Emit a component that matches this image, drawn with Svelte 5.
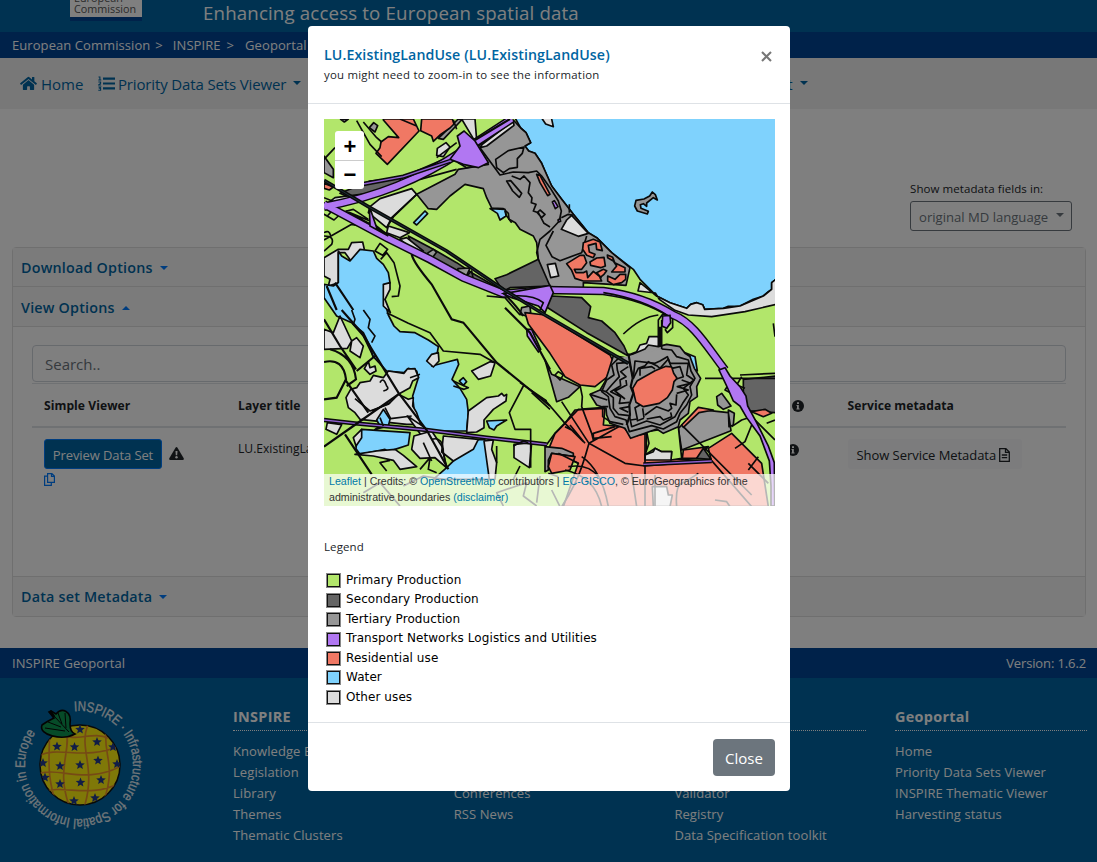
<script>
  const legend = [
    ['Primary Production', '#b2e66b'],
    ['Secondary Production', '#646464'],
    ['Tertiary Production', '#969696'],
    ['Transport Networks Logistics and Utilities', '#b177f2'],
    ['Residential use', '#f07864'],
    ['Water', '#7fd2fd'],
    ['Other uses', '#dcdcdc']
  ];

  const footerColumns = [
    { title: 'INSPIRE', links: ['Knowledge Base', 'Legislation', 'Library', 'Themes', 'Thematic Clusters'] },
    { title: 'News', links: ['News', 'Events', 'Conferences', 'RSS News'] },
    { title: 'Tools', links: ['Find', 'Share', 'Validator', 'Registry', 'Data Specification toolkit'] },
    { title: 'Geoportal', links: ['Home', 'Priority Data Sets Viewer', 'INSPIRE Thematic Viewer', 'Harvesting status'] }
  ];

  const stars = [
    [80, 729.5], [57, 746.5], [74.5, 747], [97, 742], [60, 766], [80, 765], [98, 760.5],
    [60, 784], [80.5, 782.5], [101, 780], [74, 801], [95, 798], [43, 763], [45, 777.5], [117, 764], [113, 747]
  ];

  const starPoints = (cx, cy) =>
    Array.from({ length: 10 }, (_, i) => {
      const r = i % 2 ? 2.2 : 5;
      const a = (Math.PI * i) / 5 - Math.PI / 2;
      return `${(cx + r * Math.cos(a)).toFixed(1)},${(cy + r * Math.sin(a)).toFixed(1)}`;
    }).join(' ');
</script>

<div class="page">
  <header class="banner">
    <div class="ec-logo"><span>European</span><span>Commission</span></div>
    <div class="tagline">Enhancing access to European spatial data</div>
  </header>
  <nav class="crumbs">
    <span>European Commission</span><i>&gt;</i><span>INSPIRE</span><i>&gt;</i><span>Geoportal</span>
  </nav>
  <nav class="menu">
    <a class="item home">
      <svg width="17" height="15" viewBox="0 0 576 512"><path fill="currentColor" d="M280 148L96 300v164a16 16 0 0 0 16 16l112-.3a16 16 0 0 0 16-16V368a16 16 0 0 1 16-16h64a16 16 0 0 1 16 16v96a16 16 0 0 0 16 16l112 .3a16 16 0 0 0 16-16V300L296 148a12 12 0 0 0-16 0zM572 251l-84-69V44a12 12 0 0 0-12-12h-56a12 12 0 0 0-12 12v72l-90-74a48 48 0 0 0-61 0L4 251a12 12 0 0 0-1 17l25 31a12 12 0 0 0 17 2l235-194a12 12 0 0 1 16 0l235 194a12 12 0 0 0 17-2l25-31a12 12 0 0 0-1-17z" /></svg>
      <span>Home</span>
    </a>
    <a class="item viewer">
      <svg width="17" height="15" viewBox="0 0 17 15"><path fill="currentColor" d="M5 1.5h12v2.2H5zM5 6.4h12v2.2H5zM5 11.3h12v2.2H5z" /><path fill="none" stroke="currentColor" stroke-width="1.1" d="M.5 1h1.4v3M.3 4h3M.4 6h2.2v1.3L.6 9h2.5M.4 11h2.2l-1 1.2h1v2H.3" /></svg>
      <span>Priority Data Sets Viewer</span><b class="caret"></b>
    </a>
    <a class="item last"><span>Contact</span><b class="caret"></b></a>
  </nav>

  <main>
    <div class="language">
      <label for="md">Show metadata fields in:</label>
      <button id="md">original MD language<b class="caret"></b></button>
    </div>
    <section class="accordion">
      <h5 class="first">Download Options<b class="caret blue"></b></h5>
      <h5>View Options<b class="caret blue up"></b></h5>
      <div class="view-body">
        <div class="search">Search..</div>
        <div class="row head">
          <span>Simple Viewer</span><span>Layer title</span>
          <span class="info"><svg width="12" height="12" viewBox="0 0 12 12"><circle cx="6" cy="6" r="6" fill="#212529" /><path d="M5 2.2h2v1.7H5zM4.5 5h2.3v3.5h.8v1H4.4v-1H5V6h-.5z" fill="#fff" /></svg></span>
          <span>Service metadata</span>
        </div>
        <div class="row">
          <span class="preview">
            <button class="primary">Preview Data Set</button>
            <svg width="15" height="13" viewBox="0 0 15 13"><path d="M6.5.8Q7.5-.7 8.5.8L14.7 11.2Q15.3 13 13.7 13H1.3Q-.3 13 .3 11.2z" fill="#212529" /><path d="M6.5 4h2L8.2 8.3H6.8z" fill="#fff" /><circle cx="7.5" cy="10.2" r="1.2" fill="#fff" /></svg>
            <svg class="copy" width="11" height="13" viewBox="0 0 11 13"><path d="M3.6.6h4.3L10.4 3v6.3H3.6zM7.5.6v2.8h2.9M3.5 3.2H.6v9.2h6.7V9.5" fill="none" stroke="#007bff" stroke-width="1.2" /></svg>
          </span>
          <span class="layer">LU.ExistingLandUse</span>
          <span class="info low"><svg width="12" height="12" viewBox="0 0 12 12"><circle cx="6" cy="6" r="6" fill="#212529" /><path d="M5 2.2h2v1.7H5zM4.5 5h2.3v3.5h.8v1H4.4v-1H5V6h-.5z" fill="#fff" /></svg></span>
          <span><button class="light">Show Service Metadata <svg width="11" height="14" viewBox="0 0 11 14"><path d="M.7.7h6.2l3.4 3.4v9.2H.7zM6.5.7v3.7h3.8M2.8 7h5.4M2.8 9.7h5.4" fill="none" stroke="#212529" stroke-width="1.3" /></svg></button></span>
        </div>
      </div>
      <h5 class="end">Data set Metadata<b class="caret blue"></b></h5>
    </section>
  </main>

  <div class="foot-bar"><span>INSPIRE Geoportal</span><span class="version">Version: 1.6.2</span></div>
  <footer>
    <svg class="logo" width="160" height="150" viewBox="0 690 160 150">
      <defs>
        <path id="ring" d="M74.3 711.2A54 54 0 0 1 83.7 818.8A54 54 0 0 1 74.3 711.2" />
        <clipPath id="ball"><circle cx="80" cy="765" r="40" /></clipPath>
      </defs>
      <circle cx="80" cy="765" r="40" fill="#fff010" stroke="#111" stroke-width="1.5" />
      <g clip-path="url(#ball)">
        <path d="M49 730C51 755 44 770 58 810M66 730C72 750 55 770 70 808M88 724C78 750 97 766 84 808M106 730C103 755 117 766 103 803M38 756C60 745 83 762 122 745M37 774C60 766 85 786 123 765M42 792C65 784 88 799 120 783M62 735C75 742 94 731 108 738" fill="none" stroke="#ed952a" stroke-width="1.7" />
        {#each stars as [x, y]}<polygon points={starPoints(x, y)} fill="#223a8c" />{/each}
      </g>
      <path d="M51 711L56 714C62 707 72 711 70 724Q70 732 75 734C62 741 38 735 42 725Q46 722 54 718L49 712z" fill="#0d9650" stroke="#070707" stroke-width="1.6" />
      <path d="M54 716L69 732M58 713l4 11M65 713l1 15M48 722l13 5M45 728l20 3" stroke="#070707" fill="none" />
      <path d="M50 711l4 6" stroke="#070707" stroke-width="3" />
      <text class="ring-text"><textPath href="#ring" textLength="293" lengthAdjust="spacingAndGlyphs">INSPIRE · Infrastructure for Spatial Information in Europe</textPath></text>
    </svg>
    {#each footerColumns as col}
      <div class="col">
        <h6>{col.title}</h6>
        {#each col.links as link}<a>{link}</a>{/each}
      </div>
    {/each}
  </footer>
</div>

<div class="backdrop"></div>
<div class="modal">
  <div class="modal-head">
    <div>
      <h4>LU.ExistingLandUse (LU.ExistingLandUse)</h4>
      <p>you might need to zoom-in to see the information</p>
    </div>
    <svg class="x" width="11" height="11" viewBox="0 0 11 11"><path d="M1 1l9 9M10 1l-9 9" stroke="#777" stroke-width="2.1" /></svg>
  </div>
  <div class="modal-body">
    <div class="map">
      <svg width="451" height="387" viewBox="12 9 1353 1161">
        <rect x="12" y="9" width="1353" height="1161" fill="#b2e66b" />
        <g class="shapes">
          <!-- sea and coast -->
          <path class="water" d="M582 0L602 36L618 50L632 80L615 90L626 105L645 112L664 140L675 165L695 210L725 250L760 295L805 350L830 365L875 410L940 460L960 490L975 505L1010 540L1050 560L1100 577L1112 565L1130 560L1148 566L1154 580L1210 577L1225 571L1260 570L1300 550L1330 540L1346 526L1355 520V500L1370 488V0z" />
          <path class="other" d="M661 0L677 24L700 32L693 0zM960 500L1010 540L1050 560L1100 577L1112 565L1130 560L1148 566L1154 580L1210 577L1260 570L1330 540L1355 520V500L1370 488V565L1275 587L1175 602L1105 597L1065 583L1018 550L1006 531L954 525z" />
          <path class="tertiary" d="M475 90L580 12L602 36L618 50L632 80L615 90L626 105L645 112L664 140L675 165L695 210L725 250L760 295L805 350L830 365L875 410L930 455L918 508L790 500V521L675 510L655 430L650 380L640 360L600 340L586 320L567 310L565 292L550 278L515 276L500 245L490 218L435 205L390 240L350 280L325 278L290 235L405 175L415 160L505 145z" />
          <path class="outline" d="M527 130L565 104L612 93L607 112L592 128V154L568 158L550 170L530 155zM575 180L600 190L612 180L630 200L625 230L636 245L634 260L648 265L640 285L655 290L672 322L690 333M480 95L540 177L580 168L625 170L650 165L665 180L690 215L715 255L724 285L718 315L690 345L660 370L650 410L655 430M724 305L745 295L760 298M700 345L678 388L696 422L720 434L785 410L800 360M748 265V290M652 290L660 282L675 295L665 305z" />
          <path class="tertiary" d="M1006 236L997 228L989 240L972 249L948 253L944 270L952 285L982 294L985 286L963 277L961 266L970 263L980 271V261L1000 245L1012 252z" />
          <path class="other" d="M486 86L580 14L582 28L500 90L480 95zM352 97L378 80L390 93L370 122L350 118zM425 9L460 68L470 72L465 9zM740 312L755 298L798 345L805 352L775 361L724 340zM682 446L706 442L716 480L692 485z" />
          <path class="secondary" d="M525 488L560 476L655 430L690 510L570 515L550 526zM675 570L695 540L785 545L812 572L805 605L845 615L885 650L912 690L925 720L800 650zM265 360L340 400L410 440L455 470L550 525L430 480L280 400zM150 195L242 186L245 200L100 250L60 232zM1270 790L1370 780V890L1270 884z" />
          <path class="tertiary" d="M12 120L40 160V185L12 170zM62 10L85 9L73 18zM148 35L161 20L173 29L165 48zM414 458L450 456L435 490L410 475zM355 67L415 9L425 12L370 70zM325 410L340 400L350 408L335 428L318 418zM605 575L630 570L632 590L620 600L600 595z" />
          <!-- housing in the north and by the harbour -->
          <path class="residential" d="M190 9H280L297 45L202 145L168 112L180 95L183 78L205 62L236 65L190 12zM305 9H397L402 24L390 36L362 55L340 76L335 60L302 44zM650 175L660 178L690 235L683 239L660 200zM12 202L40 213L28 222L12 217z" />
          <path class="residential" d="M740 443L780 418L792 418L800 440L785 460L763 460L768 470H790L800 465L803 485L820 466L843 485L830 470L850 460L860 464L852 475L840 485L845 495H790L765 487L755 463zM810 438L830 426L852 424L856 450L842 455L812 448zM788 400L790 380L820 370L840 378L847 404L830 400L828 382L805 388L808 408L825 415L820 425L800 418zM862 417L878 424L884 440L915 455V468L875 468L890 450L880 435L863 425zM863 480L885 490L900 475H917V490L905 500L880 506L863 495z" />
          <path class="purple" d="M697 258L703 254L714 272L706 278zM714 312L720 308L722 316L716 318z" />
          <!-- western lake district -->
          <path class="other" d="M12 425L55 400L85 400L95 380L128 378L133 400L115 435L95 438L75 410L55 410L55 500L25 510L30 490L12 480z" />
          <path class="water" d="M55 405L65 420L90 435L120 400L160 405L170 427L190 445L205 470L210 500L196 520L194 555L205 597L222 630L240 647L285 650L325 672L355 692L350 722L335 750L382 738L412 730L416 745L396 790L420 817L440 850L445 890L440 945H320L302 924L282 880L278 840L295 785L290 765L265 757L252 770L200 765L160 722L130 660L95 620L50 600L12 545V505L40 510L55 500z" />
          <path class="other" d="M12 640L40 650L60 600L95 675L82 697L12 700zM78 845L92 820L110 815L120 800L150 795L160 778L190 785L205 765L252 772L262 759L285 758L296 785L278 795L270 815L235 835L265 850L280 845L278 870L290 890L302 925L260 925L120 910L105 890L85 875zM95 675L110 665L130 690L120 725L90 705zM133 758L145 736L150 755L165 750L168 765L150 775z" />
          <path class="other" d="M262 900L300 925L335 950L380 1055L345 1025L320 980zM455 765L510 737L525 740L512 780L475 790zM445 885L500 845L535 840L545 832L552 840L560 835L558 855L520 880L492 912V935L470 948L440 950z" />
          <path class="outline" d="M95 582L105 610L100 625L130 650L150 690L160 725M130 582L150 610L145 635L165 660L155 680M105 848L150 885L205 865L235 835M195 875L212 908L275 900" />
          <path class="water" d="M165 940L180 930L170 912L190 880L210 910L205 930zM110 975L125 940L270 950L265 987L225 1000L210 1010L195 1000L170 1005L120 1015L108 998zM405 1030L465 972L494 970L510 1020L515 1090H340L380 1055zM500 915L560 912L530 930L522 942L508 935zM418 795L430 785L440 797L430 808z" />
          <path class="other" d="M105 1015L170 1005L225 1000L250 1018L290 1052L240 1060L220 1033L160 1020zM100 965L125 940L125 965L108 990zM282 960L335 945L365 990L380 1055L345 1025L300 1027L275 1000zM370 960L475 970L460 1000L400 1035L365 1008zM492 975L520 972L515 1000L530 1040L525 1090L508 1090zM582 985L635 980L628 1055L582 1025zM22 920L65 926L50 955L18 940zM190 505L210 500L210 520L195 550L211 590L190 570zM320 735L335 715L355 710L357 735L340 753z" />
          <!-- railway side plots -->
          <path class="other" d="M18 265L45 245L200 225L150 240L90 262zM150 272L180 248L275 218L290 235L215 305L200 335L145 290zM242 185L382 125L400 130L290 180L240 200zM205 330L268 350L240 365L200 350zM240 370L260 365L310 405L282 403z" />
          <path class="water" d="M281 320L315 285L323 293L290 327zM510 278L555 280L558 300L540 312L532 292z" />
          <path class="outline" d="M12 372L95 325L120 330M12 360Q45 360 35 385L12 405M12 350Q28 340 32 360M165 405L180 382L203 400L188 418zM182 430L200 410L222 440L240 510L235 540L215 542M110 14L150 85L185 122M130 18L170 65L185 78M12 295L22 300L40 280L55 300L42 312zM80 285L100 280L145 310M78 285L180 340L205 358L150 315zM415 140L440 137L470 150L440 155zM560 195L572 194L605 232L598 244L578 225zM430 490L455 465L460 490M300 190L410 160M50 260L12 245M290 235L220 303L200 335M555 284L560 300L575 320" />
        </g>

        <!-- southern quarters -->
        <g class="shapes" transform="translate(675 582)">
          <path class="residential" d="M-60 8L0 15L195 135L205 155L188 200L150 230L105 225L60 200L15 130L-50 42zM60 340L90 300L180 295L175 345L235 350L260 380L305 370L303 440L500 455L490 415L560 370L650 460L670 590H55L100 460L10 420L30 370z" />
          <path class="tertiary" d="M0 150L20 193L105 230L70 262L35 275zM400 355L460 298L550 308L558 362L410 420zM0 410L50 415L85 430V440L20 430L10 450V480L0 485zM515 260L530 250L558 288L535 298L518 285zM550 300L568 310L565 345L552 350z" />
          <path class="residential" d="M10 470L20 430L90 440L75 480L20 490zM410 345L460 292L505 300L462 308L415 352zM415 420L490 410L455 445L412 445zM620 305L660 298L680 310L655 320z" />
          <path class="secondary" d="M455 445L475 415L498 448z" />
          <path fill="#b2e66b" d="M305 365L400 350L410 445L378 450L380 425L350 425L330 415L300 435L312 400z" />
          <path class="other" d="M300 435L325 425L330 415L350 425H380L378 450H300zM250 135L275 125L285 105L305 100L312 80L340 80L348 105L270 145zM322 530H365L370 555H382L375 590H325z" />
          <path class="outline" d="M235 72Q290 20 340 15M480 205H690M585 195L690 190M535 190L550 225L540 240L580 260M590 200L575 225L600 235M105 225L112 260L110 290L140 370L145 390M50 275L132 400L240 340M0 410L30 370L100 298L180 292M132 400Q110 480 90 520T50 590M132 400L240 460L300 468L500 452L620 590M300 370V590M110 440Q170 480 190 590M60 480Q150 500 170 590M415 350L620 555M570 415L600 395L620 345M560 350L590 330L620 320L690 390M610 460L670 520M640 440L610 480M685 40L690 80M100 460L40 430M10 490L40 500M0 270L60 340L115 395M70 470Q130 460 160 500M210 350L145 370V385L200 380M665 340L690 330M60 350L90 365L110 390M75 345L120 400M30 195L40 185L55 195L45 210z" />
          <path class="outline" d="M395 590Q390 530 410 520T460 490M260 490L275 590M330 495V590M510 570L545 575L555 590M20 540L45 590" />
        </g>

        <!-- fortress -->
        <g class="ramparts" transform="translate(780 627)">
          <path class="water" d="M312 82L345 95L352 138L335 130L330 95z" />
          <path class="tertiary" d="M100 92L145 100L150 120L152 90L195 72L205 60L235 65L260 58L300 65L315 85L330 95L343 130L362 160L350 185L352 215L330 230L325 265L300 285L295 305L250 325L230 312L152 340L135 310L90 295L80 270L78 250L50 240L30 208L60 195L75 170L85 140z" />
          <path class="tertiary" d="M115 100L95 120L102 150L80 165L65 200L85 215L90 250L105 275L138 285L148 320L215 302L250 312L290 290L300 265L320 240L335 210L330 185L345 160L333 138L325 105L290 95L275 75L245 72" />
          <path class="outline" d="M60 195L78 200M30 208L82 225M85 245L68 245V275L90 290L130 298" />
          <path class="tertiary" d="M148 112L110 115L112 135L118 155L95 180L78 200L100 218L100 250L115 268L148 272L155 305L200 288L240 300L285 275L308 235L325 210L310 190L342 165L320 150L325 115L270 115L262 95L240 108L225 115L165 108L160 160z" />
          <path class="outline" d="M145 125L122 140L138 155L120 165L122 182L92 200L122 215L118 235L148 232M138 165L140 180L105 198L135 222M148 245L120 250L145 262M160 160L175 130L195 122L205 110L230 122L240 130M180 152V130L215 125L225 132M240 130L265 102L275 130L300 125L310 155L280 165M305 165L332 175L292 185L325 195L290 205M152 285L172 282L165 248L180 240M192 278L188 250M170 288L192 280M195 270L230 245L265 258L275 250L270 235L288 240L290 208M200 282L240 275L250 285L275 275L272 262" />
          <path class="residential" d="M158 190L172 167L225 137L258 124L275 126L281 145L291 160L282 170L277 195L262 218L238 235L190 245L168 232z" />
          <path class="road" d="M145 85L158 160L152 185L160 205L148 240L150 270L140 300" />
          <path class="outline" d="M235 65V-15L248 -32H272L278 -20V8L262 23L255 13M245 72V-15M240 5V60" />
        </g>

        <!-- roads -->
        <g class="roads">
          <path class="motorway edge" d="M12 272Q130 250 230 210T420 110L575 9M12 265L50 285L200 365L330 430L430 485L550 533L675 522L850 525Q970 540 1060 597C1120 620 1160 690 1215 762" />
          <path class="motorway core" d="M12 272Q130 250 230 210T420 110L575 9M12 265L50 285L200 365L330 430L430 485L550 533L675 522L850 525Q970 540 1060 597C1120 620 1160 690 1215 762" />
          <path class="purple" d="M412 60L432 45L465 75L505 140L475 155L430 145L390 130L420 90zM550 533L690 508L700 530L675 590L655 570L575 545zM148 270L170 335L205 360L150 330z" />
          <path class="outline" d="M500 540L555 545L600 597M575 540Q640 535 670 560L660 582M850 530Q970 550 1045 600" />
          <path class="purple" d="M1197 762L1215 755L1230 780L1260 812L1278 840L1283 870L1310 920L1345 990L1363 1040L1364 1170H1353V1110L1348 1035L1320 960L1280 905L1260 870L1240 855L1220 810zM1028 600L1050 598L1052 620L1040 637L1026 630zM620 640L635 640L662 700L655 708L622 660z" />
          <path class="thin edge" d="M130 204L250 182L390 135M12 912L105 922L320 942L500 965L680 985M970 1045L1175 1035" />
          <path class="thin core" d="M130 204L250 182L390 135M12 912L105 922L320 942L500 965L680 985M970 1045L1175 1035" />
          <path class="rail" d="M12 193L150 275L380 405L550 520L675 597L925 742" />
          <path class="railcore" d="M12 193L150 275L380 405L550 520L675 597L925 742" />
          <path class="road" d="M465 72L570 9M65 582L125 650L180 740L235 830L320 942L385 1060M275 415Q280 440 335 505L395 610L430 620L530 740L690 870M550 530Q590 570 610 600M555 575L630 650L690 760M12 992L100 930L235 835M75 955L155 1075M75 790L145 890M110 765L165 720M12 738Q70 725 78 790L50 845L12 850M30 700Q100 720 108 790L80 810M12 610L60 690L108 760M20 510L50 582M45 500L100 582" />
          <path class="outline" d="M200 590L265 622L330 650L370 705L480 715L525 740M610 810L568 890L585 940H632V1055M600 800L680 855M635 830L690 880M400 795L445 815L432 820L400 810M155 885L210 860M180 800Q190 780 200 810Q210 820 190 825M190 930L180 905M270 785L300 775M310 980L335 1035M300 1060L330 1025L325 1060L350 1070M335 970Q370 960 370 1010L380 1055M530 990V1040M580 990L610 975L625 980M600 1050L580 1090M240 1170L180 1100L130 1130M550 1170L530 1130L620 1100L610 1140L650 1170M660 1080L650 1160M250 1110L310 1080L370 1090M210 1033L180 1040L200 1065M400 12L410 40M12 130L45 95M240 9L290 30M410 80L350 125" />
        </g>
      </svg>
      <div class="zoom"><span>+</span><span>−</span></div>
      <div class="credits"><a>Leaflet</a> | Credits: © <a>OpenStreetMap</a> contributors | <a>EC-GISCO</a>, © EuroGeographics for the<br />administrative boundaries <a>(disclaimer)</a></div>
    </div>
    <p class="legend-title">Legend</p>
    <ul>
      {#each legend as [name, color]}
        <li><i style="background:{color}"></i>{name}</li>
      {/each}
    </ul>
  </div>
  <div class="modal-foot"><button>Close</button></div>
</div>

<style>
  :global(body) { margin: 0; overflow: hidden; }
  :global(#app) { position: relative; }
  * { box-sizing: border-box; }
  button { font: inherit; }
  .page, .modal { font-family: 'Open Sans', 'Noto Sans', sans-serif; color: #212529; }
  .page { height: 862px; overflow: hidden; background: #fff; display: flex; flex-direction: column; }
  .banner { height: 32px; flex: none; background: #0065a2; display: flex; color: #fff; }
  .ec-logo { width: 72px; height: 21px; margin-left: 70px; background: #fff; border-bottom: 4px solid #004494; overflow: hidden; display: flex; flex-direction: column; justify-content: flex-end; padding: 0 0 3px 4px; font-size: 10.8px; color: #555; }
  .ec-logo span { flex: none; line-height: 11px; }
  .tagline { margin-left: 61px; font-size: 18.7px; line-height: 26px; white-space: nowrap; letter-spacing: .15px; }
  .crumbs { height: 26px; flex: none; background: #004494; color: #fff; padding-left: 12px; display: flex; align-items: center; font-size: 13px; letter-spacing: .07px; }
  .crumbs i { font-style: normal; margin: 0 10px 0 5px; }
  .crumbs i + span + i { margin: 0 11px 0 6px; }
  .menu { height: 51px; flex: none; background: #f0f0f0; display: flex; align-items: center; padding: 0 0 0 20px; color: #0065a2; font-size: 15px; }
  .item { display: flex; align-items: center; }
  .item svg { margin-right: 4px; }
  .viewer { margin-left: 14.5px; letter-spacing: -.14px; }
  .viewer svg { margin-right: 3px; }
  .last { margin-left: 437.5px; }
  .caret { display: inline-block; width: 0; height: 0; border: 4.7px solid transparent; border-top-color: currentColor; border-bottom: 0; margin: 0 0 2px 7px; }
  .caret.blue { color: #007bff; vertical-align: 1px; }
  .caret.up { border-top: 0; border-bottom: 4.7px solid #007bff; }

  main { height: 539px; flex: none; padding: 71px 11px 0 12px; }
  .language { margin-left: 898px; height: 67px; font-size: 11.5px; }
  .language label { display: block; line-height: 17px; letter-spacing: .08px; }
  .language button { display: flex; align-items: center; justify-content: space-between; width: 162px; height: 30px; margin-top: 4px; padding: 1px 7px 0 8px; background: none; border: 1px solid #6c757d; border-radius: 3px; color: #6c757d; font-size: 13.1px; white-space: nowrap; }
  .language .caret { margin: 0 0 3px; }
  .accordion { border: 1px solid #dfdfdf; border-radius: 4px; height: 370px; }
  h5 { margin: 0; height: 40px; padding-left: 8px; line-height: 41px; font-size: 14.3px; letter-spacing: .22px; font-weight: 600; color: #0065a2; background: #f7f7f7; border-bottom: 1px solid #dfdfdf; }
  h5.first { height: 39px; line-height: 39px; }
  h5.end { border-bottom: 0; border-top: 1px solid #dfdfdf; line-height: 40px; }
  .view-body { height: 249px; padding: 18px 19px 0 19px; }
  .search { height: 37px; border: 1px solid #ced4da; border-radius: 4px; padding-left: 12px; line-height: 37px; font-size: 15px; color: #6c757d; }
  .row { display: grid; grid-template-columns: 194px 554px 55.5px 1fr; padding-left: 12px; font-size: 12.1px; }
  .head { height: 45px; margin-top: 1px; border-top: 1px solid #dee2e6; border-bottom: 2px solid #dee2e6; font-weight: 700; line-height: 43px; letter-spacing: .06px; }
  .info svg { vertical-align: -2px; }
  .info.low { margin: 13px 0 0 -5px; }
  .preview { padding-top: 11px; }
  .preview > svg { margin-left: 4px; }
  .preview > .copy { display: block; margin: 4px 0 0; }
  .primary { height: 30px; width: 118px; padding: 1px 0 0; background: #0065a2; color: #fff; border: 1px solid #007bff; border-radius: 3px; font-size: 13px; letter-spacing: -.1px; }
  .layer { padding-top: 12px; }
  .light { height: 30px; margin-top: 11px; width: 174px; padding: 1px 9px 0; background: #f8f9fa; border: 0; border-radius: 3px; color: #212529; font-size: 13px; letter-spacing: -.05px; white-space: nowrap; text-align: left; }
  .light svg { vertical-align: -2px; }

  .foot-bar { height: 30px; flex: none; background: #004494; color: #fff; display: flex; justify-content: space-between; align-items: center; padding: 0 11px 0 12px; font-size: 13px; letter-spacing: .1px; }
  .version { letter-spacing: -.12px; }
  footer { flex: 1; background: #0065a2; display: flex; color: #fff; padding-right: 11px; }
  .logo { margin: 12px 73px 0 0; flex: none; }
  .ring-text { fill: #fff; opacity: .9; font: 14px 'Liberation Sans', Arial, sans-serif; stroke: #fff; stroke-width: .25px; }
  .col { width: 192px; margin-right: 28.7px; flex: none; display: flex; flex-direction: column; font-size: 13px; line-height: 21px; padding-top: 28px; white-space: nowrap; letter-spacing: .08px; }
  h6 { margin: 0 0 10px; font-size: 14.4px; letter-spacing: .3px; line-height: 21px; height: 25px; border-bottom: 1px dotted #fff; }

  .backdrop { position: absolute; top: 0; left: 0; width: 1097px; height: 862px; background: rgba(0, 0, 0, .5); }
  .modal { position: absolute; left: 308px; top: 26px; width: 482px; height: 765px; background: #fff; border-radius: 4px; display: flex; flex-direction: column; }
  .modal-head { height: 78px; flex: none; border-bottom: 1px solid #dee2e6; padding: 18px 18px 0 16px; display: flex; justify-content: space-between; }
  h4 { margin: 0; font-size: 14.2px; letter-spacing: .1px; line-height: 22px; font-weight: 600; color: #0065a2; }
  .modal-head p { margin: 0; font-size: 11.4px; letter-spacing: .24px; line-height: 18px; }
  .x { margin-top: 7px; }
  .modal-body { height: 618px; flex: none; padding: 15px 15px 0 16px; }
  .map { position: relative; width: 451px; height: 387px; }
  .map svg { display: block; }
  .zoom { position: absolute; left: 11px; top: 12px; width: 29px; height: 58px; border-radius: 3px; background: #fff; display: grid; grid-template-rows: 29px 29px; text-align: center; font: bold 22px/31px 'Liberation Sans', Arial, sans-serif; color: #000; }
  .zoom span + span { border-top: 1px solid #ccc; line-height: 28px; }
  .zoom span { padding-left: 1px; }
  .credits { position: absolute; left: 0; right: 0; bottom: 0; height: 32px; padding-left: 5px; background: rgba(255, 255, 255, .7); font: 10.65px/15.5px 'Liberation Sans', Arial, sans-serif; color: #333; white-space: nowrap; }
  .credits a { color: #0078a8; }
  .legend-title { margin: 31px 0 15px; line-height: 20px; font-size: 11.5px; letter-spacing: .1px; }
  ul { list-style: none; margin: 0; padding: 0 0 0 3px; font: 12px/19.45px 'DejaVu Sans', sans-serif; color: #000; }
  li { display: flex; align-items: center; height: 19.45px; letter-spacing: .08px; }
  ul { margin-top: -1px; }
  li i { width: 13px; height: 13px; border: 1.5px solid #111; outline: .5px solid #888; margin-right: 6px; }
  .modal-foot { flex: 1; border-top: 1px solid #dee2e6; padding: 16px 15px; text-align: right; }
  .modal-foot button { width: 62px; height: 37px; padding: 1px 0 0; background: #6c757d; color: #fff; border: 0; border-radius: 4px; font-size: 15px; }

  .shapes path, .ramparts path { stroke: #0a0a0a; stroke-width: 5; stroke-linejoin: round; }
  .water { fill: #7fd2fd; }
  .other { fill: #dcdcdc; }
  .tertiary { fill: #969696; }
  .secondary { fill: #646464; }
  .residential { fill: #f07864; }
  .outline, .shapes .outline, .ramparts .outline { fill: none; stroke: #0a0a0a; stroke-width: 5; stroke-linejoin: round; }
  .purple { fill: #b177f2; stroke: #0a0a0a; stroke-width: 5; }
  .motorway, .thin, .rail, .railcore, .road { fill: none; stroke: #0a0a0a; }
  .motorway.edge { stroke-width: 26; }
  .motorway.core { stroke-width: 17; stroke: #b177f2; }
  .thin.edge { stroke-width: 13; }
  .thin.core { stroke-width: 4; stroke: #8f5fd0; }
  .rail { stroke-width: 11; }
  .railcore { stroke-width: 3; stroke: #1c2f36; }
  .road, .ramparts .road { stroke-width: 6.5; }
  .ramparts .road { fill: none; }
</style>
